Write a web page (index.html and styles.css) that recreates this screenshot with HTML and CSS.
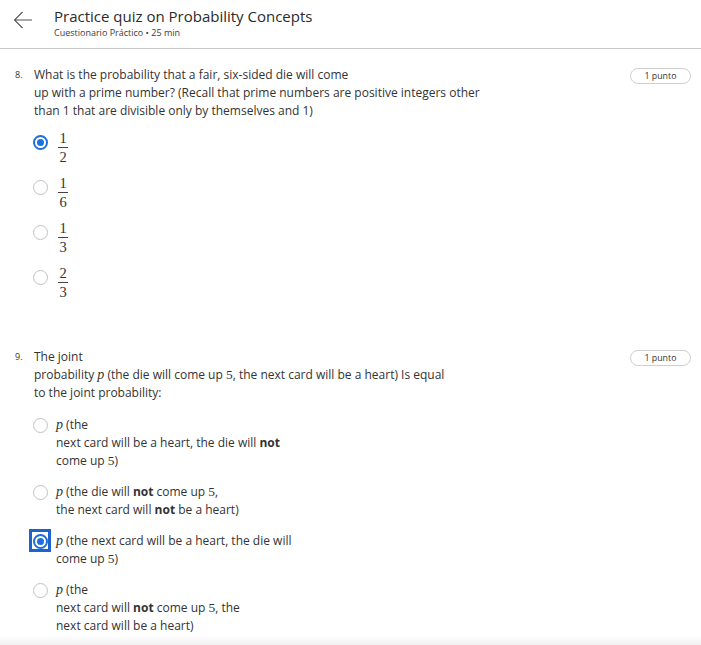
FILE: index.html
```html
<!DOCTYPE html>
<html lang="en">
<head>
<meta charset="utf-8">
<title>Practice quiz on Probability Concepts</title>
<link rel="stylesheet" href="styles.css">
</head>
<body>
<header class="top">
  <svg class="back" width="20" height="18" viewBox="0 0 20 18" aria-hidden="true">
    <path d="M19 9 H1.5 M9.5 1 L1.5 9 L9.5 17" fill="none" stroke="#555" stroke-width="1.1"/>
  </svg>
  <div class="titles">
    <h1 class="title">Practice quiz on Probability Concepts</h1>
    <div class="subtitle">Cuestionario Práctico • 25 min</div>
  </div>
</header>

<main class="quiz">
  <section class="q q8">
    <div class="q-head">
      <span class="num">8.</span>
      <div class="q-text">What is the probability that a fair, six-sided die will come<br>up with a prime number? (Recall that prime numbers are positive integers other<br>than 1 that are divisible only by themselves and 1)</div>
      <span class="badge">1 punto</span>
    </div>
    <div class="options frac-options">
      <div class="opt"><span class="radio checked"></span><span class="frac"><span class="fn">1</span><span class="fbar"></span><span class="fd">2</span></span></div>
      <div class="opt"><span class="radio"></span><span class="frac"><span class="fn">1</span><span class="fbar"></span><span class="fd">6</span></span></div>
      <div class="opt"><span class="radio"></span><span class="frac"><span class="fn">1</span><span class="fbar"></span><span class="fd">3</span></span></div>
      <div class="opt"><span class="radio"></span><span class="frac"><span class="fn">2</span><span class="fbar"></span><span class="fd">3</span></span></div>
    </div>
  </section>

  <section class="q q9">
    <div class="q-head">
      <span class="num">9.</span>
      <div class="q-text">The joint<br>probability <i class="m">p</i> (the die will come up <span class="mn">5</span>, the next card will be a heart) Is equal<br>to the joint probability:</div>
      <span class="badge">1 punto</span>
    </div>
    <div class="options text-options">
      <div class="opt"><span class="radio"></span><span class="opt-text"><i class="m">p</i> (the<br>next card will be a heart, the die will <b>not</b><br>come up <span class="mn">5</span>)</span></div>
      <div class="opt"><span class="radio"></span><span class="opt-text"><i class="m">p</i> (the die will <b>not</b> come up <span class="mn">5</span>,<br>the next card will <b>not</b> be a heart)</span></div>
      <div class="opt"><span class="radio checked focused"></span><span class="opt-text"><i class="m">p</i> (the next card will be a heart, the die will<br>come up <span class="mn">5</span>)</span></div>
      <div class="opt"><span class="radio"></span><span class="opt-text"><i class="m">p</i> (the<br>next card will <b>not</b> come up <span class="mn">5</span>, the<br>next card will be a heart)</span></div>
    </div>
  </section>
</main>
<div class="bottom-fade"></div>
</body>
</html>
```

FILE: styles.css
```css
*, *::before, *::after { box-sizing: border-box; }

html, body {
  margin: 0;
  padding: 0;
  background: #fff;
}

body {
  font-family: "Open Sans", "Liberation Sans", sans-serif;
  color: #333;
  width: 701px;
}

.top {
  height: 49px;
  border-bottom: 1px solid #c8c8c8;
  display: flex;
  align-items: flex-start;
}

.back {
  margin: 11px 0 0 13px;
  flex: none;
}

.titles {
  margin-left: 21px;
  padding-top: 6px;
}

.title {
  margin: 0;
  font-size: 15px;
  font-weight: 400;
  line-height: 20px;
  color: #2b2b2b;
}

.subtitle {
  font-size: 9px;
  line-height: 12px;
  margin-top: 1px;
  color: #3c3c3c;
}

.quiz {
  padding-top: 17px;
}

.q-head {
  display: flex;
  align-items: flex-start;
  padding-left: 15px;
  padding-right: 10px;
}

.num {
  width: 19px;
  flex: none;
  font-size: 9px;
  line-height: 17px;
  color: #333;
}

.q-text {
  font-size: 12px;
  line-height: 18px;
  white-space: nowrap;
  color: #333;
}

.badge {
  margin-left: auto;
  margin-top: 2px;
  flex: none;
  width: 61px;
  height: 16px;
  border: 1px solid #cfcfcf;
  border-radius: 8px;
  font-size: 8.8px;
  line-height: 14px;
  text-align: center;
  color: #333;
}

.options {
  display: flex;
  flex-direction: column;
  padding-left: 33px;
}

.frac-options {
  margin-top: 9px;
  gap: 8px;
}

.text-options {
  margin-top: 14px;
  gap: 13px;
}

.opt {
  display: flex;
  align-items: flex-start;
}

.radio {
  position: relative;
  flex: none;
  width: 15px;
  height: 15px;
  border-radius: 50%;
  border: 1.5px solid #c2c2c2;
  background: #fff;
  margin-top: 1.5px;
}

.radio.checked {
  border: 2px solid #1e6fdc;
}

.radio.checked::before {
  content: "";
  position: absolute;
  left: 2px;
  top: 2px;
  width: 7px;
  height: 7px;
  border-radius: 50%;
  background: #1e6fdc;
}

.radio.focused::after {
  content: "";
  position: absolute;
  left: -6px;
  top: -7px;
  width: 22px;
  height: 23px;
  border: 3px solid #1c63cc;
}

.frac-options .radio {
  margin-top: 5.5px;
}

.frac {
  display: inline-flex;
  flex-direction: column;
  align-items: center;
  margin-left: 10px;
  font-family: "Liberation Serif", "DejaVu Serif", serif;
  font-size: 14.5px;
  color: #333;
  width: 10px;
}

.fn, .fd {
  line-height: 18px;
  height: 18px;
}

.fbar {
  width: 10px;
  height: 1px;
  background: #444;
}

.q9 {
  margin-top: 47px;
}

.opt-text {
  margin-left: 8px;
  font-size: 12px;
  line-height: 18px;
  white-space: nowrap;
  color: #333;
}

.m {
  font-family: "Liberation Serif", "DejaVu Serif", serif;
  font-size: 14px;
  font-style: italic;
}

.mn {
  font-family: "Liberation Serif", "DejaVu Serif", serif;
  font-size: 13.5px;
}

b {
  font-weight: 700;
}

.bottom-fade {
  position: fixed;
  left: 0;
  right: 0;
  bottom: 0;
  height: 10px;
  background: linear-gradient(to bottom, rgba(240,240,240,0), rgba(238,238,238,0.8));
  pointer-events: none;
}
```
